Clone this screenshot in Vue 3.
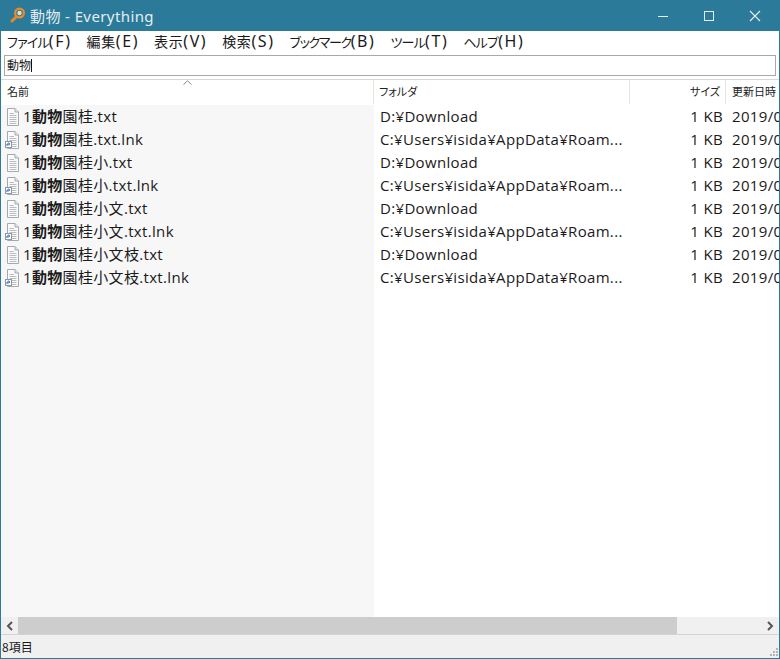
<script setup>
const menus = [
  ['ファイル', '(F)', 'kana'], ['編集', '(E)', 'kanji'], ['表示', '(V)', 'kanji'], ['検索', '(S)', 'kanji'],
  ['ブックマーク', '(B)', 'kana long'], ['ツール', '(T)', 'kana'], ['ヘルプ', '(H)', 'kana']
]
const roam = 'C:¥Users¥isida¥AppData¥Roam...'
const rows = [
  ['園桂.txt', 'txt', 'D:¥Download'],
  ['園桂.txt.lnk', 'lnk', roam],
  ['園桂小.txt', 'txt', 'D:¥Download'],
  ['園桂小.txt.lnk', 'lnk', roam],
  ['園桂小文.txt', 'txt', 'D:¥Download'],
  ['園桂小文.txt.lnk', 'lnk', roam],
  ['園桂小文枝.txt', 'txt', 'D:¥Download'],
  ['園桂小文枝.txt.lnk', 'lnk', roam]
]
</script>

<template>
  <div class="window">
    <header class="titlebar">
      <svg class="logo" width="18" height="18" viewBox="0 0 18 18">
        <path d="M7.5 10.5 L3 15" stroke="#e8862a" stroke-width="3" stroke-linecap="round" />
        <circle cx="10.5" cy="7" r="4.4" fill="#2f7f9c" stroke="#ea8a2e" stroke-width="2.2" />
        <circle cx="10.5" cy="7" r="2.2" fill="#f6dcae" />
      </svg>
      <span class="title">動物 - Everything</span>
      <div class="controls">
        <svg width="12" height="12" viewBox="0 0 12 12"><path d="M1 6.5H11" stroke="#e6f0f4" /></svg>
        <svg width="12" height="12" viewBox="0 0 12 12"><rect x="1.5" y="1.5" width="9" height="9" fill="none" stroke="#e6f0f4" /></svg>
        <svg width="12" height="12" viewBox="0 0 12 12"><path d="M1 1L11 11M11 1L1 11" stroke="#e6f0f4" stroke-width="1.1" /></svg>
      </div>
    </header>

    <nav class="menubar">
      <span v-for="m in menus" :key="m[0]"><span :class="m[2]">{{ m[0] }}</span><span class="key">{{ m[1] }}</span></span>
    </nav>

    <div class="searchwrap">
      <div class="search">動物<i class="caret"></i></div>
    </div>

    <div class="table">
      <div class="head">
        <div class="h name">名前<svg class="sort" width="9" height="5" viewBox="0 0 9 5"><path d="M.5 4.5L4.5 .8L8.5 4.5" fill="none" stroke="#8a8a8a" /></svg></div>
        <div class="h folder">フォルダ</div>
        <div class="h size">サイズ</div>
        <div class="h date">更新日時</div>
      </div>
      <div class="body">
        <div v-for="r in rows" :key="r[0]" class="row">
          <div class="c name">
            <svg class="fileicon" width="15" height="18" viewBox="0 0 15 18">
              <path d="M2.5 .5H10L13.5 4V17.5H2.5Z" fill="#fbfbfb" stroke="#a4a9ae" />
              <path d="M10 .5V4H13.5" fill="#e4e6e8" stroke="#a4a9ae" />
              <path d="M4.5 5.5H9M4.5 7.5H11.5M4.5 9.5H11.5M4.5 11.5H11.5M4.5 13.5H11.5M4.5 15.5H11.5" stroke="#b9bdc2" />
              <template v-if="r[1] === 'lnk'">
                <rect x="0.5" y="10.5" width="6" height="6" fill="#fff" stroke="#8899ae" />
                <path d="M2 15V13H4.5M3.4 11.8L4.8 13L3.4 14.2" fill="none" stroke="#2a5fb0" />
              </template>
            </svg>
            <span class="fname">1<b>動物</b>{{ r[0] }}</span>
          </div>
          <div class="c folder">{{ r[2] }}</div>
          <div class="c size">1 KB</div>
          <div class="c date">2019/09/01</div>
        </div>
      </div>
    </div>

    <div class="hscroll">
      <svg class="arrow left" width="8" height="10" viewBox="0 0 8 10"><path d="M6 1L2 5L6 9" fill="none" stroke="#555" stroke-width="2" /></svg>
      <div class="track"><div class="thumb"></div></div>
      <svg class="arrow" width="8" height="10" viewBox="0 0 8 10"><path d="M2 1L6 5L2 9" fill="none" stroke="#555" stroke-width="2" /></svg>
    </div>

    <footer class="status">
      <span>8項目</span>
      <svg class="grip" width="10" height="10" viewBox="0 0 10 10" fill="#b4b4b4">
        <rect x="7" y="1" width="2" height="2" /><rect x="4" y="4" width="2" height="2" /><rect x="7" y="4" width="2" height="2" />
        <rect x="1" y="7" width="2" height="2" /><rect x="4" y="7" width="2" height="2" /><rect x="7" y="7" width="2" height="2" />
      </svg>
    </footer>
  </div>
</template>

<style>
html, body { margin: 0; background: #fff; }
</style>

<style scoped>
.window {
  width: 780px;
  height: 659px;
  box-sizing: border-box;
  border: 1px solid #2b7a99;
  border-top: 0;
  display: flex;
  flex-direction: column;
  overflow: hidden;
  background: #fff;
  font-family: "Open Sans", "Noto Sans CJK JP", sans-serif;
  font-feature-settings: "palt";
  color: #1a1a1a;
}
.titlebar {
  height: 31px;
  flex: none;
  margin: 0 -1px;
  background: #2b7a99;
  display: flex;
  align-items: center;
  padding-left: 9px;
  color: #e4eef2;
  font-size: 15px;
}
.logo { flex: none; margin-right: 3px; margin-top: -2px; }
.title {
  flex: 1;
  letter-spacing: .4px;
  font-family: "Noto Sans", "Noto Sans CJK JP", sans-serif;
  font-feature-settings: normal;
}
.controls { display: flex; align-items: center; gap: 34px; padding-right: 19px; }
.controls svg { display: block; }
.menubar {
  height: 23px;
  box-sizing: border-box;
  padding: 0 0 3px 6px;
  flex: none;
  display: flex;
  gap: 15px;
  align-items: center;
  font-size: 14px;
  font-family: "Noto Sans", "Noto Sans CJK JP", sans-serif;
}
.kana { font-size: 13px; letter-spacing: -.8px; }
.kana.long { letter-spacing: -1.4px; }
.kanji { letter-spacing: .6px; }
.key { font-size: 16px; letter-spacing: 1.6px; }
.searchwrap { flex: none; height: 26px; padding: 1px 3px 0 3px; box-sizing: border-box; border-bottom: 1px solid #d9d9d9; }
.search {
  height: 21px;
  box-sizing: border-box;
  border: 1px solid #a9a9a9;
  padding-left: 2px;
  font-size: 12px;
  line-height: 19px;
  display: flex;
  align-items: center;
}
.caret { width: 1px; height: 13px; background: #111; }
.table { flex: 1; min-height: 0; display: flex; flex-direction: column; }
.head { height: 25px; flex: none; display: flex; font-size: 11px; color: #222; }
.h {
  position: relative;
  box-sizing: border-box;
  display: flex;
  align-items: center;
  padding: 0 0 2px 6px;
  border-right: 1px solid #e5e5e5;
  height: 24px;
}
.name { width: 373px; flex: none; }
.folder { width: 256px; flex: none; }
.h.folder { padding-left: 5px; }
.size { width: 96px; flex: none; }
.date { flex: 1; min-width: 0; }
.h.size { justify-content: flex-end; padding-right: 5px; }
.h.date { border-right: 0; white-space: nowrap; overflow: hidden; }
.sort { position: absolute; top: 0; left: 182px; }
.body {
  flex: 1;
  background: linear-gradient(to right, #f7f7f7 373px, #fff 373px);
}
.row {
  height: 23px;
  display: flex;
  font-size: 15px;
  letter-spacing: .33px;
  line-height: 22px;
  white-space: nowrap;
}
.c { box-sizing: border-box; overflow: hidden; }
.c.name { display: flex; align-items: center; padding-left: 4px; }
.fileicon { flex: none; margin-right: 3px; }
.fname { margin-bottom: 2px; }
.fname b { font-weight: 700; }
.c.folder { padding-left: 6px; }
.c.size { text-align: right; padding-right: 3px; }
.c.date { padding-left: 6px; }
.hscroll {
  height: 18px;
  flex: none;
  display: flex;
  align-items: center;
  background: #f0f0f0;
  border-bottom: 1px solid #d4d4d4;
  box-sizing: border-box;
}
.arrow { flex: none; margin: 0 5px; }
.arrow.left { margin-right: 4px; }
.track { flex: 1; height: 100%; }
.thumb { width: 659px; height: 100%; background: #cdcdcd; }
.status {
  height: 23px;
  flex: none;
  display: flex;
  align-items: center;
  justify-content: space-between;
  background: #f0f0f0;
  padding-left: 1px;
  font-size: 12px;
  font-family: "Noto Sans CJK JP", sans-serif;
}
.grip { align-self: flex-end; margin-bottom: 1px; }
</style>
